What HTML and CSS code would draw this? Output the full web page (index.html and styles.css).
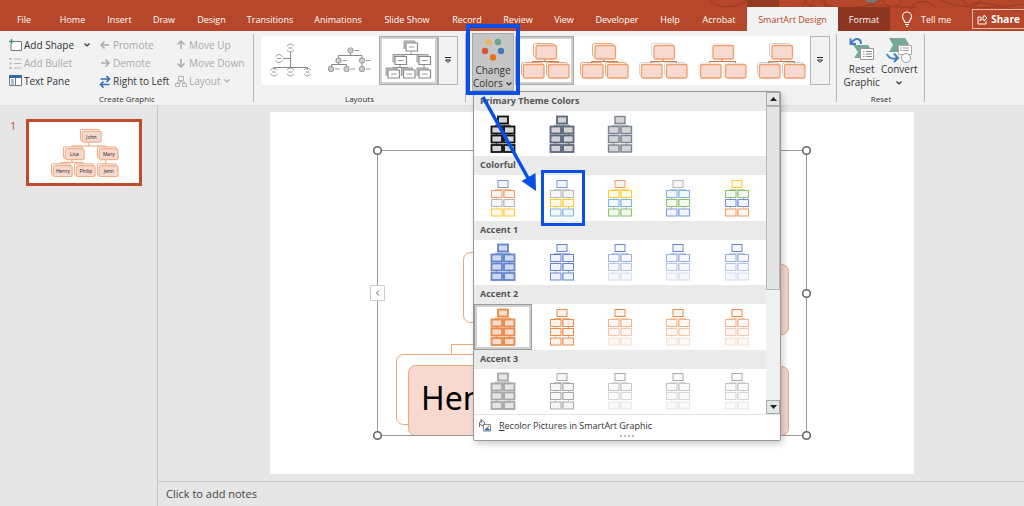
FILE: index.html
```html
<!DOCTYPE html>
<html lang="en">
<head>
<meta charset="utf-8">
<title>SmartArt Design</title>
<link rel="stylesheet" href="styles.css">
</head>
<body>
<svg class="defs" aria-hidden="true">
  <symbol id="tree" viewBox="0 0 26 38">
    <g class="links">
      <path class="l2" d="M5 10.500h16"/>
      <path class="l3" d="M6.500 19v1.500M19.500 19v1.500"/>
      <path class="l4" d="M6.500 28v2M19.500 28v2"/>
    </g>
    <rect class="l1" x="8" y="1.500" width="10" height="7"/>
    <rect class="l2" x="1.500" y="11.500" width="10.500" height="7"/><rect class="l2" x="14" y="11.500" width="10.500" height="7"/>
    <rect class="l3" x="1.500" y="20.500" width="10.500" height="7"/><rect class="l3" x="14" y="20.500" width="10.500" height="7"/>
    <rect class="l4" x="1.500" y="30" width="10.500" height="7"/><rect class="l4" x="14" y="30" width="10.500" height="7"/>
    <g class="links"><path class="l2" d="M13.500 12v6"/><path class="l3" d="M13.500 21v6"/><path class="l4" d="M13.500 30.500v6"/></g>
  </symbol>
  <symbol id="style" viewBox="0 0 50 38">
    <g class="back">
      <rect x="13.500" y="1.500" width="21" height="13" rx="2"/><rect x="1.500" y="20.500" width="21" height="13" rx="2"/><rect x="26.500" y="20.500" width="21" height="13" rx="2"/>
    </g>
    <path d="M25 17v2M12.500 21v-1.500h26v1.500" fill="none" stroke="#c87850"/>
    <g class="front">
      <rect x="16" y="3.500" width="20.500" height="13.500" rx="1.500"/><rect x="3.500" y="22.500" width="20.500" height="13.500" rx="1.500"/><rect x="28.500" y="22.500" width="20.500" height="13.500" rx="1.500"/>
    </g>
  </symbol>
  <symbol id="chev" viewBox="0 0 8 6"><path d="M1.500 1.500 4 4l2.500-2.500" fill="none" stroke="currentColor" stroke-width="1.200"/></symbol>
  <symbol id="more" viewBox="0 0 8 8"><path d="M1 1.500h6" stroke="#222" fill="none"/><path d="M1.500 4 4 6.500 6.500 4z" fill="none" stroke="#222"/></symbol>
  <symbol id="arc" viewBox="0 0 10 10"><path d="M1.500 3q3.500-4 7 0M1.500 7q3.500 4 7 0M3 5h4" fill="none" stroke="#999"/></symbol>
  <symbol id="dot" viewBox="0 0 13 8"><circle cx="4" cy="4" r="2.700" fill="#ccc" stroke="#999"/><path d="M8 4h4.500" stroke="#999"/></symbol>
  <symbol id="box" viewBox="0 0 16 12"><path d="M1 9V1h11v2" fill="#ccc" stroke="#999"/><path d="M3 3h11.500v8H3z" fill="#fff" stroke="#888" stroke-width="1.200"/><path d="M6 7h5.500" stroke="#999"/></symbol>
  <symbol id="node" viewBox="0 0 23 15"><rect x="1" y="1" width="19" height="11" rx="1" fill="#fff" stroke="#eda577"/><rect x="2.800" y="2.800" width="19" height="11" rx="1.500" fill="#f8d7cd" stroke="#eda577"/></symbol>
</svg>

<header class="titlebar">
  <svg class="pattern" width="324" height="31" viewBox="0 0 324 31" aria-hidden="true">
    <path d="M47 0h32v7H47z" fill="#933a23"/>
    <g fill="none" stroke="#9c3d25" stroke-width="1.200">
      <path d="M10 0c6 9 26 9 37 0M84 6c20 14 30 20 40 2 8-12-16-12-12 0M134 14c-16-2-24-8-30-12M120 0c10 12 40 10 62 0M183 0c3 10 20 8 18-2M168 5c20 0 34 4 50 2M240 0c20 8 44 10 84 4M212 3c6 8-4 16-2 7s18-12 26-2M272 3c16-2 36 6 54 10M262 0c6 8 16 6 18 0"/>
      <circle cx="115" cy="9" r="12"/>
    </g>
    <path d="M166 0h12l-4 3-8-1z" fill="#777"/>
  </svg>
  <nav class="tabs">
    <a href="#file">File</a><a href="#home">Home</a><a href="#insert">Insert</a><a href="#draw">Draw</a><a href="#design">Design</a><a href="#transitions">Transitions</a><a href="#animations">Animations</a><a href="#slideshow">Slide Show</a><a href="#record">Record</a><a href="#review">Review</a><a href="#view">View</a><a href="#developer">Developer</a><a href="#help">Help</a><a href="#acrobat">Acrobat</a><a href="#smartart" class="active">SmartArt Design</a><a href="#format" class="context">Format</a>
  </nav>
  <button class="tellme"><svg width="12" height="16" viewBox="0 0 12 16" fill="none" stroke="#fff" stroke-width="1.100"><path d="M4 11.500c0-2-2.500-3-2.500-6a4.500 4.500 0 0 1 9 0c0 3-2.500 4-2.500 6zM4 13.500h4M5 15.200h2"/></svg>Tell me</button>
  <button class="share"><svg width="11" height="11" viewBox="0 0 11 11" fill="none" stroke="#fff"><path d="M4 3H1v7h8V7M3 7c.5-3 2-4 4-4V1l3 3-3 3V5C5 5 4 5.500 3 7z"/></svg>Share<svg width="8" height="6"><use href="#chev"/></svg></button>
</header>

<section class="ribbon">
  <div class="group create">
    <div class="commands">
      <button><svg width="13" height="13" viewBox="0 0 13 13" fill="none"><path d="M4 2.500h8.500v9H2V5" stroke="#777" fill="#fff"/><path d="M2.500 0v5M0 2.500h5" stroke="#3f9a7c" stroke-width="1.400"/></svg>Add Shape<svg class="far" width="8" height="6"><use href="#chev"/></svg></button>
      <button disabled><svg width="12" height="12" viewBox="0 0 12 12" fill="none" stroke="#aaa" stroke-width="1.500"><path d="M10 6H2M5.500 2.500 2 6l3.500 3.500"/></svg>Promote</button>
      <button disabled><svg width="12" height="12" viewBox="0 0 12 12" fill="none" stroke="#aaa" stroke-width="1.500"><path d="M6 10V2M2.500 5.500 6 2l3.500 3.500"/></svg>Move Up</button>
      <button disabled><svg width="13" height="13" viewBox="0 0 13 13" stroke="#b4b4b4"><path d="M5 2h7.500M5 6.500h7.500M5 11h7.500"/><path d="M.5 2h2M.5 6.500h2M.5 11h2" stroke-width="2.200"/></svg>Add Bullet</button>
      <button disabled><svg width="12" height="12" viewBox="0 0 12 12" fill="none" stroke="#aaa" stroke-width="1.500"><path d="M2 6h8M6.500 2.500 10 6 6.500 9.500"/></svg>Demote</button>
      <button disabled><svg width="12" height="12" viewBox="0 0 12 12" fill="none" stroke="#aaa" stroke-width="1.500"><path d="M6 2v8M2.500 6.500 6 10l3.500-3.500"/></svg>Move Down</button>
      <button><svg width="13" height="12" viewBox="0 0 13 12"><path d="M.5 1.500h12v9H.5z" fill="#fff" stroke="#777"/><path d="M0 0h13v3H0z" fill="#2f68ad"/><path d="M2 5h3M2 7h3M2 9h3" stroke="#3f7fc0"/><path d="M6.500 3v8" stroke="#777"/></svg>Text Pane</button>
      <button><svg width="12" height="13" viewBox="0 0 12 13" fill="none" stroke="#3273b8" stroke-width="1.700"><path d="M1.500 4H10M7.500 1l3 3-3 3M10.500 9.500H2M4.500 6.500l-3 3 3 3"/></svg>Right to Left</button>
      <button disabled><svg width="12" height="13" viewBox="0 0 12 13" fill="none" stroke="#b4b4b4"><path d="M3.500 1.500h5v4h-5zM.5 8.500h4v3h-4zM7.500 8.500h4v3h-4zM6 5.500V7M2.500 8.500V7h7v1.500"/></svg>Layout<svg width="8" height="6"><use href="#chev"/></svg></button>
    </div>
    <h2>Create Graphic</h2>
  </div>
  <div class="group layouts">
    <div class="gallery">
      <button class="cell" aria-label="Half circle organization chart"><svg viewBox="0 0 59 49"><path d="M29.500 16v16M22 22.500h7.500M13 34v-2.500h33.500V34" fill="none" stroke="#888"/><use href="#arc" x="24.500" y="7" width="10" height="10"/><use href="#arc" x="13" y="17.500" width="10" height="10"/><use href="#arc" x="8" y="31" width="10" height="10"/><use href="#arc" x="24.500" y="31" width="10" height="10"/><use href="#arc" x="41.500" y="31" width="10" height="10"/></svg></button>
      <button class="cell" aria-label="Circle picture hierarchy"><svg viewBox="0 0 59 49"><path d="M30.500 17v3M18.500 22v-2.500H42V32M11.500 31v-2.500h15V31M18.500 26v3" fill="none" stroke="#888"/><use href="#dot" x="26.500" y="10.500" width="13" height="8"/><use href="#dot" x="14.500" y="20.500" width="13" height="8"/><use href="#dot" x="38" y="20.500" width="13" height="8"/><use href="#dot" x="7" y="29" width="13" height="8"/><use href="#dot" x="22.500" y="29" width="13" height="8"/><use href="#dot" x="38" y="29" width="13" height="8"/></svg></button>
      <button class="cell selected" aria-label="Hierarchy"><svg viewBox="0 0 59 49"><path d="M32 16v3M21 21v-2.500h24V34M14 34v-2.500h15V34M21 28v4" fill="none" stroke="#888"/><use href="#box" x="24" y="4" width="16" height="12"/><use href="#box" x="13" y="17.500" width="16" height="12"/><use href="#box" x="37" y="17.500" width="16" height="12"/><use href="#box" x="6" y="31" width="16" height="12"/><use href="#box" x="21.500" y="31" width="16" height="12"/><use href="#box" x="37" y="31" width="16" height="12"/></svg></button>
      <button class="expand" aria-label="More layouts"><svg width="8" height="8"><use href="#more"/></svg></button>
    </div>
    <h2>Layouts</h2>
  </div>
  <div class="group styles">
    <div class="row">
      <button class="change" aria-expanded="true"><svg width="24" height="24" viewBox="0 0 24 24"><circle cx="7.500" cy="4" r="3.200" fill="#eab65c"/><circle cx="17" cy="4" r="3.200" fill="#62a58b"/><circle cx="4" cy="13" r="3.200" fill="#dd5532"/><circle cx="20" cy="13" r="3.200" fill="#4679b8"/><circle cx="12" cy="19.500" r="3.200" fill="#e67417"/></svg><span>Change<br>Colors <svg width="8" height="6"><use href="#chev"/></svg></span></button>
      <div class="gallery">
        <button class="cell selected s1" aria-label="Style 1"><svg viewBox="0 0 50 38"><use href="#style"/></svg></button>
        <button class="cell s1" aria-label="Style 2"><svg viewBox="0 0 50 38"><use href="#style"/></svg></button>
        <button class="cell s2" aria-label="Style 3"><svg viewBox="0 0 50 38"><use href="#style"/></svg></button>
        <button class="cell s3" aria-label="Style 4"><svg viewBox="0 0 50 38"><use href="#style"/></svg></button>
        <button class="cell s4" aria-label="Style 5"><svg viewBox="0 0 50 38"><use href="#style"/></svg></button>
        <button class="expand" aria-label="More styles"><svg width="8" height="8"><use href="#more"/></svg></button>
      </div>
    </div>
    <div class="menu">
      <div class="body">
        <div class="list">
          <section><h3>Primary Theme Colors</h3><div class="swatches">
            <button class="solid black" aria-label="Dark 1 outline"><svg><use href="#tree"/></svg></button><button class="solid slate" aria-label="Dark 2 outline"><svg><use href="#tree"/></svg></button><button class="steel" aria-label="Dark 2 fill"><svg><use href="#tree"/></svg></button></div></section>
          <section><h3>Colorful</h3><div class="swatches">
            <button class="mix1" aria-label="Colorful 1"><svg><use href="#tree"/></svg></button><button class="mix2" aria-label="Colorful 2"><svg><use href="#tree"/></svg></button><button class="mix3" aria-label="Colorful 3"><svg><use href="#tree"/></svg></button><button class="mix4" aria-label="Colorful 4"><svg><use href="#tree"/></svg></button><button class="mix5" aria-label="Colorful 5"><svg><use href="#tree"/></svg></button></div></section>
          <section><h3>Accent 1</h3><div class="swatches blue">
            <button class="solid" aria-label="Accent 1 fill"><svg><use href="#tree"/></svg></button><button aria-label="Accent 1 outline"><svg><use href="#tree"/></svg></button><button class="fade" aria-label="Accent 1 gradient"><svg><use href="#tree"/></svg></button><button class="fade" aria-label="Accent 1 loop"><svg><use href="#tree"/></svg></button><button class="fade" aria-label="Accent 1 transparent"><svg><use href="#tree"/></svg></button></div></section>
          <section><h3>Accent 2</h3><div class="swatches orange">
            <button class="solid current" aria-label="Accent 2 fill"><svg><use href="#tree"/></svg></button><button aria-label="Accent 2 outline"><svg><use href="#tree"/></svg></button><button class="fade" aria-label="Accent 2 gradient"><svg><use href="#tree"/></svg></button><button class="fade" aria-label="Accent 2 loop"><svg><use href="#tree"/></svg></button><button class="fade" aria-label="Accent 2 transparent"><svg><use href="#tree"/></svg></button></div></section>
          <section><h3>Accent 3</h3><div class="swatches gray">
            <button class="solid" aria-label="Accent 3 fill"><svg><use href="#tree"/></svg></button><button aria-label="Accent 3 outline"><svg><use href="#tree"/></svg></button><button class="fade" aria-label="Accent 3 gradient"><svg><use href="#tree"/></svg></button><button class="fade" aria-label="Accent 3 loop"><svg><use href="#tree"/></svg></button><button class="fade" aria-label="Accent 3 transparent"><svg><use href="#tree"/></svg></button></div></section>
        </div>
        <div class="scroll">
          <button aria-label="Scroll up"><svg width="7" height="4"><path d="M0 4 3.500 0 7 4z" fill="#222"/></svg></button>
          <div class="thumb"></div>
          <button aria-label="Scroll down"><svg width="7" height="4"><path d="M0 0 3.500 4 7 0z" fill="#222"/></svg></button>
        </div>
      </div>
      <button class="recolor"><svg width="13" height="13" viewBox="0 0 13 13"><path d="M5.500 5.500h7v6.500h-7z" fill="#fff" stroke="#888"/><path d="M6 11.500 9 8l3.500 3.500z" fill="#2f74bd"/><circle cx="10.500" cy="7.500" r="1" fill="#e08040"/><path d="M1 4 4 1l3 3-3 3zM3 0v4M1.500 5v3" fill="#eee" stroke="#777"/></svg><span><u>R</u>ecolor Pictures in SmartArt Graphic</span></button>
      <div class="grip"><i></i><i></i><i></i><i></i></div>
    </div>
  </div>
  <div class="group reset">
    <div class="row">
      <button class="big"><svg width="26" height="26" viewBox="0 0 26 26"><path d="M4 8h15l4 6-4 7H5l4-6z" fill="#75a897"/><path d="M11.500 11.500h13v11h-13z" fill="#fff" stroke="#999"/><path d="M14 14.500h1.500M17 14.500h6M14 17h1.500M17 17h6M14 19.500h1.500M17 19.500h6" stroke="#888"/><path d="M12 7C12 1 6 0 2.500 6M1.500 1.500V7H7" fill="none" stroke="#3f7fc0" stroke-width="2"/></svg><span>Reset<br>Graphic</span></button>
      <button class="big"><svg width="26" height="26" viewBox="0 0 26 26"><path d="M3 1h16l4 6-4 8H3l4-7z" fill="#75a897"/><path d="M12.500 8.500h13v9h-13z" fill="#fff" stroke="#aaa"/><path d="M14 11h2M17 11h6M14 13.500h2M17 13.500h6" stroke="#999"/><circle cx="20" cy="21" r="4.500" fill="#fff" stroke="#999"/><path d="M1 17c2 5 7 5 10 4M8 16.500l4 4.500-4 4" fill="none" stroke="#3f7fc0" stroke-width="2"/></svg><span>Convert<br><svg width="8" height="6"><use href="#chev"/></svg></span></button>
    </div>
    <h2>Reset</h2>
  </div>
</section>

<main class="workspace">
  <aside class="slides">
    <span>1</span>
    <button class="preview" aria-label="Slide 1"><svg viewBox="0 0 110 61">
      <path d="M60 21v3M43 27v-3h34v3M32 43v-2.500h22V43M43 38v2.500M77 38v5" fill="none" stroke="#eda577"/>
      <use href="#node" x="50.500" y="6.500" width="23" height="15"/><use href="#node" x="33.500" y="24" width="23" height="15"/><use href="#node" x="67.500" y="24" width="23" height="15"/><use href="#node" x="21.500" y="41" width="23" height="15"/><use href="#node" x="44.500" y="41" width="23" height="15"/><use href="#node" x="67.500" y="41" width="23" height="15"/>
      <g class="names"><text x="62.500" y="17">John</text><text x="45.500" y="34.500">Lisa</text><text x="80" y="34.500">Mary</text><text x="34" y="51.500">Henry</text><text x="57" y="51.500">Philip</text><text x="80" y="51.500">Jenn</text></g>
    </svg></button>
  </aside>
  <div class="editor">
    <div class="stage">
      <svg class="slide" viewBox="0 0 644 362">
        <g stroke="#eca777" fill="#fff">
          <rect x="193.500" y="140.500" width="110" height="70" rx="7"/>
          <path d="M181.500 242v-9.500H420" fill="none"/>
          <rect x="126.500" y="242.500" width="110" height="70" rx="7"/>
          <rect x="138.500" y="253.500" width="110" height="70" rx="7" fill="#f8d9d0"/>
          <rect x="408.500" y="152.500" width="110" height="70" rx="7" fill="#f5d6cf"/>
          <rect x="408.500" y="254.500" width="110" height="69" rx="7" fill="#f5d6cf"/>
        </g>
        <text class="name" x="151" y="298">Henry</text>
        <path d="M107.500 38.500h429v285h-429z" fill="none" stroke="#999"/>
        <g fill="#fff" stroke="#666" stroke-width="1.600"><circle cx="107.500" cy="38.500" r="3.800"/><circle cx="536.500" cy="38.500" r="3.800"/><circle cx="536.500" cy="181.500" r="3.800"/><circle cx="536.500" cy="323.500" r="3.800"/><circle cx="107.500" cy="323.500" r="3.800"/></g>
        <path d="M100.500 173.500h14v15h-14z" fill="#fff" stroke="#ccc"/><path d="M109 178.500 106.500 181l2.500 2.500" fill="none" stroke="#666"/>
      </svg>
    </div>
    <div class="notes">Click to add notes</div>
  </div>
</main>

<svg class="callout" width="140" height="210" viewBox="0 0 140 210" aria-hidden="true">
  <g fill="none" stroke="#0a50e6"><path d="M8 6h50v67H8z" stroke-width="4"/><path d="M82.500 151.500h41v53h-41z" stroke-width="3"/><path d="M23 77 68 158" stroke-width="3.500"/></g>
  <path d="M76 171 61.500 161l14-8z" fill="#0a50e6"/>
</svg>
</body>
</html>
```
FILE: styles.css
```css
* { box-sizing: border-box; }
body { margin: 0; min-height: 100vh; display: flex; flex-direction: column; overflow: hidden; position: relative; background: #e6e6e6; color: #333; font: 10px/13px "Open Sans", sans-serif; }
button { margin: 0; padding: 0; border: 0; background: none; color: inherit; font: inherit; }
h2, h3 { margin: 0; font: inherit; }
.defs { position: absolute; width: 0; height: 0; }

.titlebar { display: flex; position: relative; height: 31px; background: #b7472a; color: #fff; font-size: 9px; overflow: hidden; }
.pattern { position: absolute; right: 0; top: 0; }
.tabs { position: relative; display: grid; grid-template-columns: 48px 49px 45px 44px 51px 66px 70px 68px 52px 50px 42px 64px 42px 56px 91px 52px; padding-top: 7px; }
.tabs a { display: flex; align-items: center; justify-content: center; color: #fff; text-decoration: none; white-space: nowrap; }
.tabs .active { background: #f2f2f2; color: #b7472a; }
.tabs .context { background: #8c3520; }
.tellme { position: relative; display: flex; flex: none; align-items: center; gap: 8px; margin-left: 11px; padding-top: 7px; }
.share { position: relative; display: flex; flex: none; align-items: center; gap: 3px; margin: 9px 0 2px 21px; padding: 0 4px; border: 1px solid #e4b5a8; font-size: 10px; font-weight: 700; }

.ribbon { display: flex; height: 75px; background: #f2f2f2; border-bottom: 1px solid #ddd; }
.group { display: flex; flex-direction: column; justify-content: space-between; flex: none; position: relative; padding-top: 5px; }
.group::after { content: ""; position: absolute; right: 0; top: 3px; bottom: 3px; width: 1px; background: #b5b5b5; }
.group h2 { padding-bottom: 1px; text-align: center; font-size: 8px; line-height: 11px; }
.create { width: 254px; }
.layouts { width: 212px; padding-left: 7px; }
.layouts h2 { padding-right: 8px; }
.styles { width: 371px; padding-left: 6px; }
.reset { width: 88px; }
.commands { display: grid; grid-template-columns: 90px 76px 78px; grid-auto-rows: 18px; padding-left: 9px; }
.commands button { display: flex; align-items: center; gap: 2px; white-space: nowrap; }
.commands button:disabled { color: #aaa; }
.commands .far { margin-left: 7px; }
.row { display: flex; }
.gallery { display: flex; height: 49px; }
.cell { width: 59px; padding: 0; background: #fff; }
.cell svg { display: block; width: 100%; height: 100%; }
.cell.selected { box-shadow: inset 0 0 0 1px #aaa, inset 0 0 0 3px #d0d0cc; }
.expand { width: 20px; border: 1px solid #b5b5b5; }
.styles .gallery { flex: 1; padding-right: 9px; margin-left: 1px; }
.styles .gallery { padding-right: 9px; }
.styles .cell { flex: 1; }
.styles .cell svg { width: 50px; height: 38px; margin: auto; }
.styles .row { padding-right: 3px; }
.back rect { fill: #fff; stroke: var(--back, #eda577); }
.front rect { fill: #f8d9d0; stroke: #ed9f6c; stroke-width: 1.300px; }
.s2 { --back: #d6d6d6; }
.s3 { --back: #f6f2f0; }
.s4 { --back: #ccc; }
.change { width: 42px; height: 58px; margin-top: -3px; padding-top: 3px; background: #c6c6c6; border: 1px solid #aaa; }
.change > svg, .big > svg { display: block; margin: 0 auto; }
.change span { display: block; padding-top: 2px; white-space: nowrap; }
.reset .row { justify-content: center; gap: 2px; }
.reset .big { padding-top: 1px; margin-left: -1px; }
.big { display: block; }

.menu { position: absolute; z-index: 2; left: 7px; top: 60px; width: 308px; height: 350px; display: flex; flex-direction: column; background: #fff; border: 1px solid #999; border-radius: 2px; box-shadow: 2px 3px 6px #0003; }
.body { display: flex; height: 323px; border-bottom: 1px solid #e4e4e4; }
.list { flex: 1; display: grid; grid-template-rows: repeat(5, 1fr); }
.list section { display: flex; flex-direction: column; }
.list h3 { height: 19px; padding-left: 6px; background: #eaeaea; color: #555; font-size: 9px; font-weight: 700; line-height: 18px; }
.swatches { flex: 1; display: grid; grid-template-columns: repeat(5, 1fr); }
.swatches button { display: flex; align-items: center; justify-content: center; }
.swatches svg { width: 26px; height: 38px; }
.current { box-shadow: inset 0 0 0 1px #999, inset 0 0 0 3px #d0d0cc; }
.links { opacity: .6; }
.l1, .l2, .l3, .l4 { fill-opacity: var(--fo, .1); stroke-width: var(--sw, 1px); }
.l1 { stroke: var(--a); fill: var(--fill, var(--a)); }
.l2 { stroke: var(--b, var(--a)); fill: var(--fill, var(--b, var(--a))); stroke-opacity: var(--o2, 1); }
.l3 { stroke: var(--c, var(--a)); fill: var(--fill, var(--c, var(--a))); stroke-opacity: var(--o3, 1); }
.l4 { stroke: var(--d, var(--a)); fill: var(--fill, var(--d, var(--a))); stroke-opacity: var(--o4, 1); }
.solid { --fo: .3; --sw: 1.800px; }
.black { --a: #111; --fill: #aaa; --fo: .5; }
.slate { --a: #5a677c; --fill: #aaa; --fo: .5; }
.steel { --a: #7b8496; --fill: #aaa; --fo: .5; --sw: 1.400px; }
.fade { --o2: .65; --o3: .45; --o4: .25; --fo: .06; }
.blue { --a: #6485cb; }
.orange { --a: #e88a4b; }
.gray { --a: #a8a8a8; }
.mix1 { --a: #7b97d6; --b: #f09a62; --c: #b5b5b5; --d: #ffc82e; }
.mix2 { --a: #7b97d6; --b: #b5b5b5; --c: #ffc82e; --d: #7fb2e0; }
.mix3 { --a: #f09a62; --b: #ffc82e; --c: #7fb2e0; --d: #8cc06c; }
.mix4 { --a: #b5b5b5; --b: #7fb2e0; --c: #8cc06c; --d: #7b97d6; }
.mix5 { --a: #ffc82e; --b: #8cc06c; --c: #6d8fd8; --d: #f09a62; }
.scroll { width: 14px; display: flex; flex-direction: column; background: #f1f1f1; }
.scroll button { height: 14px; display: flex; align-items: center; justify-content: center; background: #e6e6e6; border: 1px solid #aaa; }
.scroll .thumb { height: 184px; margin-bottom: auto; background: #e4e4e4; border: 1px solid #b5b5b5; }
.recolor { display: flex; align-items: center; gap: 8px; height: 20px; padding-left: 4px; font-size: 9px; }
.grip { display: flex; justify-content: center; gap: 2px; }
.grip i { width: 2px; height: 2px; background: #bbb; }

.workspace { flex: 1; display: flex; }
.slides { width: 158px; display: flex; align-items: flex-start; gap: 10px; padding: 13px 15px 0 10px; border-right: 1px solid #c8c8c8; color: #c0503a; font-size: 11px; }
.preview { flex: 1; border: 3px solid #c04a2b; background: #fff; padding: 0; }
.preview svg { display: block; width: 100%; }
.names { font-size: 5px; text-anchor: middle; fill: #222; }
.editor { flex: 1; display: flex; flex-direction: column; justify-content: space-between; }
.stage { padding: 6px 110px 0 112px; }
.slide { display: block; width: 100%; background: #fff; }
.name { font: 32px "Noto Sans", sans-serif; fill: #000; }
.notes { border-top: 1px solid #c8c8c8; height: 25px; padding-left: 8px; font-size: 11px; line-height: 23px; color: #444; }
.callout { position: absolute; z-index: 3; left: 460px; top: 20px; }
```
